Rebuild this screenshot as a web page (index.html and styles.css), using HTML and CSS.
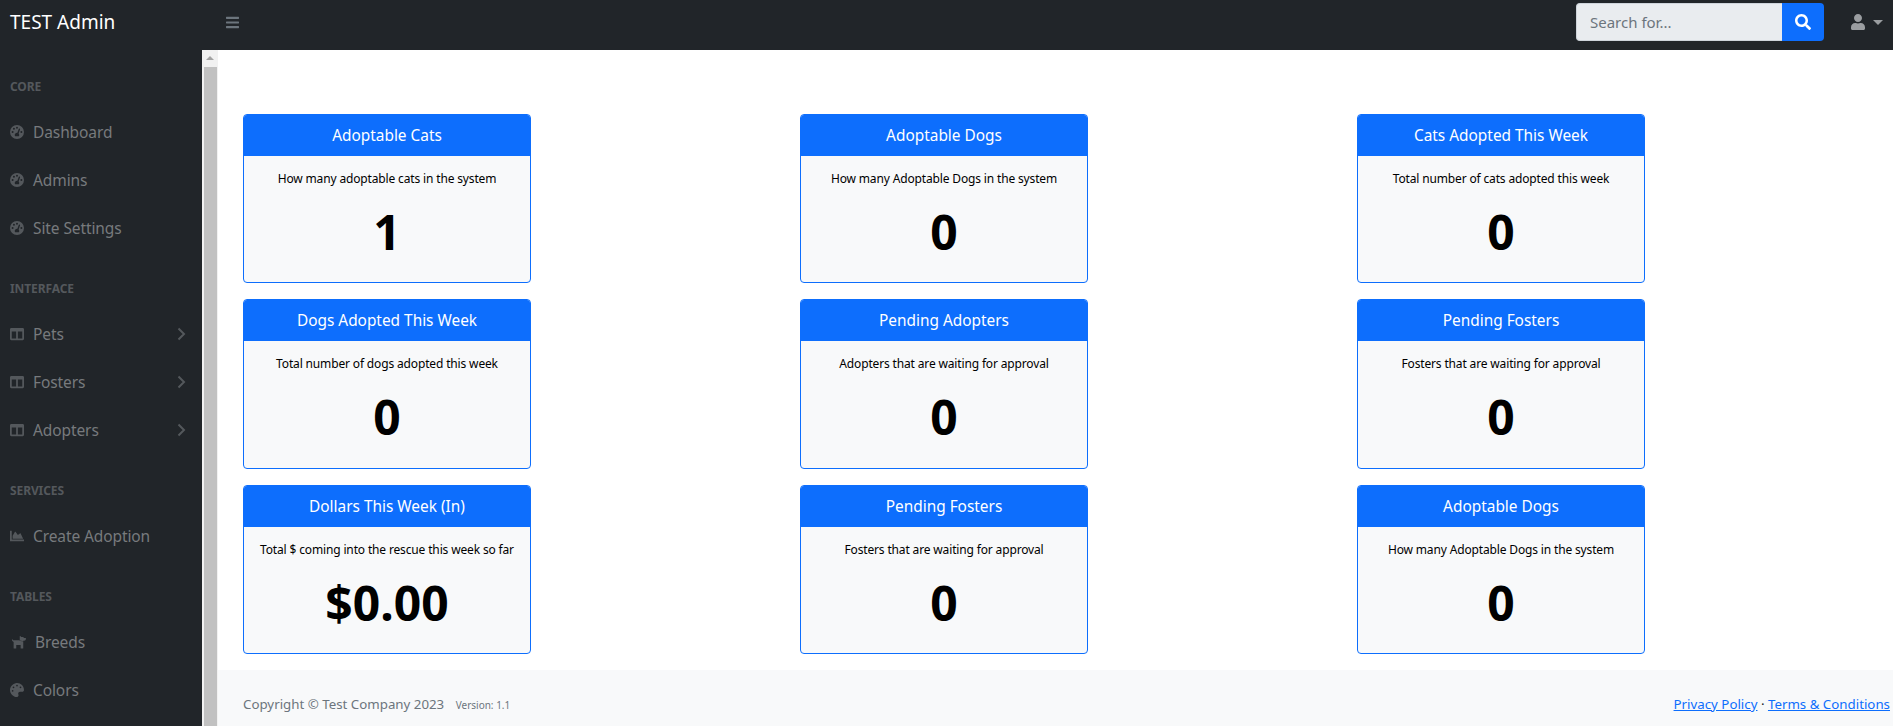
FILE: index.html
```html
<!DOCTYPE html>
<html lang="en">
<head>
  <meta charset="UTF-8" />
  <meta name="viewport" content="width=device-width, initial-scale=1.0"/>
  <title>TEST Admin</title>
  <link rel="stylesheet" href="styles.css">
</head>
<body>

  <svg class="icon-defs" xmlns="http://www.w3.org/2000/svg">
    <symbol id="i-bars" viewBox="0 0 448 512"><path d="M16 132h416c8.837 0 16-7.163 16-16V76c0-8.837-7.163-16-16-16H16C7.163 60 0 67.163 0 76v40c0 8.837 7.163 16 16 16zm0 160h416c8.837 0 16-7.163 16-16v-40c0-8.837-7.163-16-16-16H16c-8.837 0-16 7.163-16 16v40c0 8.837 7.163 16 16 16zm0 160h416c8.837 0 16-7.163 16-16v-40c0-8.837-7.163-16-16-16H16c-8.837 0-16 7.163-16 16v40c0 8.837 7.163 16 16 16z"/></symbol>
    <symbol id="i-search" viewBox="0 0 512 512"><path d="M505 442.7L405.3 343c-4.5-4.5-10.6-7-17-7H372c27.6-35.3 44-79.7 44-128C416 93.1 322.9 0 208 0S0 93.1 0 208s93.1 208 208 208c48.3 0 92.7-16.4 128-44v16.3c0 6.4 2.5 12.5 7 17l99.7 99.7c9.4 9.4 24.6 9.4 33.9 0l28.3-28.3c9.4-9.4 9.4-24.6.1-34zM208 336c-70.7 0-128-57.2-128-128 0-70.7 57.2-128 128-128 70.7 0 128 57.2 128 128 0 70.7-57.2 128-128 128z"/></symbol>
    <symbol id="i-user" viewBox="0 0 448 512"><path d="M224 256c70.7 0 128-57.3 128-128S294.7 0 224 0 96 57.3 96 128s57.3 128 128 128zm89.6 32h-16.7c-22.2 10.2-46.9 16-72.9 16s-50.6-5.8-72.9-16h-16.7C60.2 288 0 348.2 0 422.4V464c0 26.5 21.5 48 48 48h352c26.5 0 48-21.5 48-48v-41.6c0-74.2-60.2-134.4-134.4-134.4z"/></symbol>
    <symbol id="i-gauge" viewBox="0 0 512 512"><path fill-rule="evenodd" d="M256 0a256 256 0 1 0 0 512 256 256 0 0 0 0-512zM256 64a36 36 0 1 1 0 72 36 36 0 0 1 0-72zM96 288a36 36 0 1 1 0-72 36 36 0 0 1 0 72zm48-112a36 36 0 1 1 0-72 36 36 0 0 1 0 72zM350 132c13 4 20 18 16 31l-50 150c14 13 22 31 22 51 0 17-6 33-16 44H190c-10-11-16-27-16-44 0-45 37-82 82-82h14l50-134c4-13 17-20 30-16zM416 288a36 36 0 1 1 0-72 36 36 0 0 1 0 72z"/></symbol>
    <symbol id="i-columns" viewBox="0 0 512 512"><path d="M464 32H48C21.49 32 0 53.49 0 80v352c0 26.51 21.49 48 48 48h416c26.51 0 48-21.49 48-48V80c0-26.51-21.49-48-48-48zM224 416H64V160h160v256zm224 0H288V160h160v256z"/></symbol>
    <symbol id="i-chart" viewBox="0 0 512 512"><path d="M500 384c6.6 0 12 5.4 12 12v40c0 6.6-5.4 12-12 12H12c-6.6 0-12-5.4-12-12V76c0-6.6 5.4-12 12-12h40c6.6 0 12 5.4 12 12v308h436zM372.7 159.5L288 216l-85.3-113.7c-5.1-6.8-15.5-6.3-19.9 1L96 248v104h384l-89.9-187.8c-3.2-6.5-11.4-8.7-17.4-4.7z"/></symbol>
    <symbol id="i-dog" viewBox="0 0 576 512"><path d="M576 112v32c0 35-29 64-64 64h-32v32L352 196V56c0-14 17-21 27-11l27 27h54c11 0 22 6 29 14l15 26h72zM320 192l160 57v231c0 9-7 16-16 16h-64c-9 0-16-7-16-16V368H224v112c0 9-7 16-16 16h-64c-9 0-16-7-16-16V258C91 245 64 210 64 168c0-9 7-16 16-16s16 7 16 16c0 13 11 24 24 24h200z"/></symbol>
    <symbol id="i-palette" viewBox="0 0 512 512"><path d="M204.3 5C104.9 24.4 24.8 104.3 5.2 203.4c-37 187 131.7 326.4 258.8 306.7 41.2-6.4 61.4-54.6 42.5-91.7-23.1-45.4 9.9-98.4 60.9-98.4h79.7c35.8 0 64.8-29.6 64.9-65.3C511.5 97.1 368.1-26.9 204.3 5zM96 320c-17.7 0-32-14.3-32-32s14.3-32 32-32 32 14.3 32 32-14.3 32-32 32zm32-128c-17.7 0-32-14.3-32-32s14.3-32 32-32 32 14.3 32 32-14.3 32-32 32zm128-64c-17.7 0-32-14.3-32-32s14.3-32 32-32 32 14.3 32 32-14.3 32-32 32zm128 64c-17.7 0-32-14.3-32-32s14.3-32 32-32 32 14.3 32 32-14.3 32-32 32z"/></symbol>
    <symbol id="i-chevron" viewBox="0 0 9 14"><polyline points="1.5,1.5 7,7 1.5,12.5"/></symbol>
  </svg>

  <nav class="topnav">
    <a class="brand" href="#">TEST Admin</a>
    <button class="menu-btn"><svg class="icon"><use href="#i-bars"/></svg></button>
    <form class="search">
      <input type="text" placeholder="Search for..." />
      <button type="button"><svg class="icon"><use href="#i-search"/></svg></button>
    </form>
    <a class="user-menu" href="#"><svg class="icon"><use href="#i-user"/></svg><span class="caret"></span></a>
  </nav>

  <div class="layout">
    <aside class="sidebar">
      <div class="nav-heading">Core</div>
      <a class="nav-link" href="#"><svg class="icon"><use href="#i-gauge"/></svg>Dashboard</a>
      <a class="nav-link" href="#"><svg class="icon"><use href="#i-gauge"/></svg>Admins</a>
      <a class="nav-link" href="#"><svg class="icon"><use href="#i-gauge"/></svg>Site Settings</a>

      <div class="nav-heading">Interface</div>
      <a class="nav-link" href="#"><svg class="icon"><use href="#i-columns"/></svg>Pets<svg class="chevron"><use href="#i-chevron"/></svg></a>
      <a class="nav-link" href="#"><svg class="icon"><use href="#i-columns"/></svg>Fosters<svg class="chevron"><use href="#i-chevron"/></svg></a>
      <a class="nav-link" href="#"><svg class="icon"><use href="#i-columns"/></svg>Adopters<svg class="chevron"><use href="#i-chevron"/></svg></a>

      <div class="nav-heading">Services</div>
      <a class="nav-link" href="#"><svg class="icon"><use href="#i-chart"/></svg>Create Adoption</a>

      <div class="nav-heading">Tables</div>
      <a class="nav-link" href="#"><svg class="icon icon-wide"><use href="#i-dog"/></svg>Breeds</a>
      <a class="nav-link" href="#"><svg class="icon"><use href="#i-palette"/></svg>Colors</a>
    </aside>

    <div class="scrollbar">
      <div class="scroll-up"></div>
      <div class="scroll-thumb"></div>
    </div>

    <div class="main">
      <main class="cards">
        <div class="card">
          <div class="card-header">Adoptable Cats</div>
          <div class="card-body"><p>How many adoptable cats in the system</p><h1>1</h1></div>
        </div>
        <div class="card">
          <div class="card-header">Adoptable Dogs</div>
          <div class="card-body"><p>How many Adoptable Dogs in the system</p><h1>0</h1></div>
        </div>
        <div class="card">
          <div class="card-header">Cats Adopted This Week</div>
          <div class="card-body"><p>Total number of cats adopted this week</p><h1>0</h1></div>
        </div>
        <div class="card">
          <div class="card-header">Dogs Adopted This Week</div>
          <div class="card-body"><p>Total number of dogs adopted this week</p><h1>0</h1></div>
        </div>
        <div class="card">
          <div class="card-header">Pending Adopters</div>
          <div class="card-body"><p>Adopters that are waiting for approval</p><h1>0</h1></div>
        </div>
        <div class="card">
          <div class="card-header">Pending Fosters</div>
          <div class="card-body"><p>Fosters that are waiting for approval</p><h1>0</h1></div>
        </div>
        <div class="card">
          <div class="card-header">Dollars This Week (In)</div>
          <div class="card-body"><p>Total $ coming into the rescue this week so far</p><h1>$0.00</h1></div>
        </div>
        <div class="card">
          <div class="card-header">Pending Fosters</div>
          <div class="card-body"><p>Fosters that are waiting for approval</p><h1>0</h1></div>
        </div>
        <div class="card">
          <div class="card-header">Adoptable Dogs</div>
          <div class="card-body"><p>How many Adoptable Dogs in the system</p><h1>0</h1></div>
        </div>
      </main>

      <footer class="footer">
        <div class="copyright">Copyright &copy; Test Company 2023 <small>Version: 1.1</small></div>
        <div class="legal"><a href="#">Privacy Policy</a> &middot; <a href="#">Terms &amp; Conditions</a></div>
      </footer>
    </div>
  </div>

</body>
</html>
```

FILE: styles.css
```css
* {
  box-sizing: border-box;
  margin: 0;
  padding: 0;
}

html {
  height: 100%;
  overflow: hidden;
}

body {
  height: 100%;
  overflow: hidden;
  display: flex;
  flex-direction: column;
  font-family: "Noto Sans", "Open Sans", sans-serif;
  font-size: 16px;
  background: #fff;
  color: #000;
}

.icon-defs {
  display: none;
}

.icon {
  fill: currentColor;
  display: block;
  flex-shrink: 0;
}

/* top bar */

.topnav {
  height: 50px;
  flex-shrink: 0;
  display: flex;
  align-items: center;
  padding-bottom: 6px;
  background: #212529;
}

.brand {
  width: 226px;
  padding-left: 10px;
  color: #fff;
  font-size: 19px;
  text-decoration: none;
}

.menu-btn {
  background: none;
  border: none;
  color: #6c757d;
  width: 13px;
}

.menu-btn .icon {
  width: 13px;
  height: 15px;
}

.search {
  margin-left: auto;
  display: flex;
  height: 38px;
}

.search input {
  width: 206px;
  border: 1px solid #ced4da;
  border-right: none;
  border-radius: 4px 0 0 4px;
  background: #e9ecef;
  padding: 0 13px;
  font: inherit;
  font-size: 15px;
  color: #212529;
  outline: none;
}

.search input::placeholder {
  color: #6c757d;
}

.search button {
  width: 42px;
  border: none;
  border-radius: 0 4px 4px 0;
  background: #0d6efd;
  color: #fff;
  display: flex;
  align-items: center;
  justify-content: center;
}

.search .icon {
  width: 16px;
  height: 16px;
}

.user-menu {
  width: 69px;
  padding-left: 27px;
  display: flex;
  align-items: center;
  gap: 8px;
  color: #9a9da0;
  text-decoration: none;
}

.user-menu .icon {
  width: 14px;
  height: 16px;
}

.caret {
  border-top: 5px solid #9a9da0;
  border-left: 5px solid transparent;
  border-right: 5px solid transparent;
}

/* sidebar */

.layout {
  flex: 1;
  min-height: 0;
  display: flex;
  overflow: hidden;
}

.sidebar {
  width: 202px;
  flex-shrink: 0;
  background: #212529;
  overflow: hidden;
}

.nav-heading {
  padding: 28px 10px 12px;
  font-size: 12px;
  line-height: 18px;
  font-weight: 700;
  text-transform: uppercase;
  letter-spacing: -0.1px;
  color: #54585c;
}

.nav-link {
  height: 48px;
  display: flex;
  align-items: center;
  padding: 0 16px 0 10px;
  font-size: 15.5px;
  letter-spacing: -0.1px;
  color: #777a7d;
  text-decoration: none;
}

.nav-link .icon {
  width: 14px;
  height: 14px;
  margin-right: 9px;
  color: #54585c;
}

.nav-link .icon-wide {
  width: 16px;
  margin-right: 9px;
}

.chevron {
  margin-left: auto;
  width: 9px;
  height: 14px;
  fill: none;
  stroke: #54585c;
  stroke-width: 2;
}

/* fake scrollbar, the panel scrolled inside the frame */

.scrollbar {
  width: 16px;
  flex-shrink: 0;
  display: flex;
  flex-direction: column;
  background: #f1f1f1;
}

.scroll-up {
  height: 17px;
  display: flex;
  justify-content: center;
  padding-top: 6px;
}

.scroll-up::before {
  content: "";
  height: 0;
  border-bottom: 4px solid #a3a3a3;
  border-left: 4px solid transparent;
  border-right: 4px solid transparent;
}

.scroll-thumb {
  flex: 1;
  margin: 0 1px 0 2px;
  background: #c1c1c1;
}

/* main */

.main {
  flex: 1;
  display: flex;
  flex-direction: column;
  min-width: 0;
}

.cards {
  flex: 1;
  padding: 64px 0 0 25px;
  display: grid;
  grid-template-columns: repeat(3, 288px);
  grid-auto-rows: 169.3px;
  column-gap: 269px;
  row-gap: 16px;
  align-content: start;
}

.card {
  display: flex;
  flex-direction: column;
  border: 1px solid #0d6efd;
  border-radius: 4px;
  overflow: hidden;
  background: #f8f9fa;
}

.card-header {
  height: 41px;
  flex-shrink: 0;
  display: flex;
  align-items: center;
  justify-content: center;
  background: #0d6efd;
  color: #fff;
  font-size: 15.4px;
}

.card-body {
  flex: 1;
  padding-top: 14px;
  text-align: center;
}

.card-body p {
  font-size: 12px;
  line-height: 18px;
  letter-spacing: -0.15px;
  margin-bottom: 14px;
}

.card-body h1 {
  font-size: 48px;
  line-height: 60px;
  font-weight: 700;
}

.footer {
  height: 56px;
  flex-shrink: 0;
  display: flex;
  justify-content: space-between;
  align-items: center;
  padding: 12px 3px 0 25px;
  background: #f8f9fa;
  font-size: 13.3px;
  color: #6c757d;
}

.footer small {
  font-size: 10px;
  margin-left: 8px;
}

.legal {
  color: #212529;
}

.legal a {
  color: #0d6efd;
}
```
